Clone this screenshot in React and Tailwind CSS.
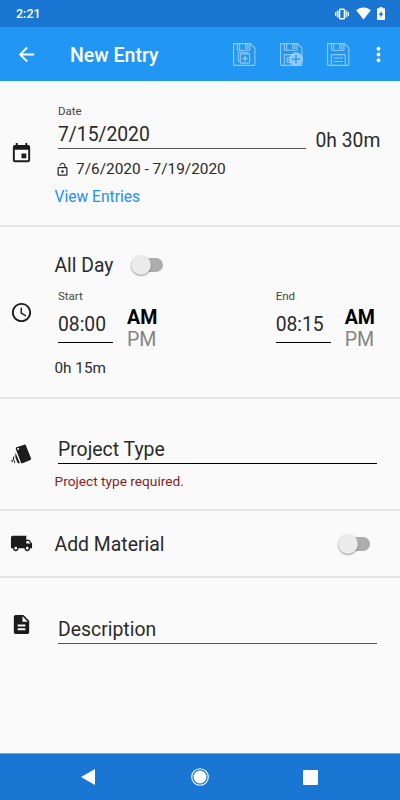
import React, { useState } from 'react';
import {
  MdAccessTime,
  MdArrowBack,
  MdDescription,
  MdEvent,
  MdLocalShipping,
  MdLockOpen,
  MdMoreVert,
} from 'react-icons/md';

const StatusBar = () => (
  <div className="flex h-[27px] shrink-0 items-center bg-[#1976d2] pl-4 pr-[15px] text-white">
    <span className="flex-1 text-[12.5px] font-medium leading-[26px] pt-[1px]">2:21</span>
    <svg width="14" height="12" viewBox="0 0 14 12" className="mr-[7px]">
      <rect x="4.6" y="1.2" width="4.8" height="9.6" rx="0.8" fill="none" stroke="currentColor" strokeWidth="1.4" />
      <path d="M2.700 2.500v7M11.300 2.500v7" stroke="currentColor" strokeWidth="2" opacity="0.75" />
      <path d="M0.700 4v4M13.300 4v4" stroke="currentColor" strokeWidth="1.200" />
    </svg>
    <svg width="15" height="13" viewBox="0 0 15 13" className="mr-[6px]">
      <path d="M7.5 12.6L0.2 3.2C2 1.5 4.6 0.4 7.5 0.4s5.500 1.100 7.300 2.800z" fill="currentColor" />
    </svg>
    <svg width="8" height="13" viewBox="0 0 8 13">
      <path d="M2.500 0h3v1.300H7.200a.8.8 0 0 1 .8.8V12.200a.8.8 0 0 1-.8.8H.8a.8.8 0 0 1-.8-.8V2.100a.8.8 0 0 1 .8-.8h1.700z" fill="currentColor" />
      <path d="M4.500 3.800L1.700 8h1.800v2.800L6.300 6.600H4.500z" fill="#1976d2" />
    </svg>
  </div>
);

// Floppy disk outline shared by the three save actions
const Disk = ({ children }) => (
  <svg width="25" height="25" viewBox="0 0 25 25" fill="none" stroke="#90caf9" strokeWidth="1.1">
    <path d="M1.600 1.600H18.500L22.900 6V22.400a1 1 0 0 1-1 1H2.600a1 1 0 0 1-1-1z" />
    <path d="M5.300 1.600V7.200a1 1 0 0 0 1 1H17a1 1 0 0 0 1-1V1.600" />
    <path d="M7.600 1.600V8.200M13.600 2.800h2.400v3.400h-2.400z" />
    {children}
  </svg>
);

// Fanned stack of cards
const CardsIcon = ({ size, className }) => (
  <svg width={size} height={size} viewBox="0 0 23 23" fill="currentColor" className={className}>
    <path
      fillRule="evenodd"
      d="M7.300 4.100L14.300 1.700a1.300 1.300 0 0 1 1.600.7L21 15.300a1.300 1.300 0 0 1-.7 1.700L12.600 20.200a1.300 1.300 0 0 1-1.700-.7L5.900 6.300a1.500 1.500 0 0 1 1.400-2.200zM8.200 5.100a.9.9 0 1 0 .01 0z"
    />
    <path d="M5.400 9.500L9.900 20.200H8.400a1 1 0 0 1-1-.7L5.400 14.500zM4.100 12.300V16.500L5.300 19.900H4.300L2.800 15.300zM2.200 16.300L3 19.200 1.600 18.600a.9.9 0 0 1-.4-1z" />
  </svg>
);

const AppBar = () => (
  <div className="flex h-[54px] shrink-0 items-center bg-[#2196f3] pr-[10px] pl-[15px] text-white">
    <MdArrowBack size={23} />
    <h1 className="ml-[32px] flex-1 pt-[3px] text-[19.5px] font-medium leading-6">New Entry</h1>
    <div className="flex gap-[22px] mr-[16px] pt-px">
      <Disk>
        <path d="M8.200 19.200H7a.8.8 0 0 1-.8-.8V11a.8.800 0 0 1 .8-.8h8.400a.8.8 0 0 1 .8.8v.8" />
        <rect x="8.300" y="11.900" width="9.300" height="9.200" rx="0.800" />
        <path d="M13 13.800v5.400M10.300 16.500h5.400" strokeWidth="1.500" />
      </Disk>
      <Disk>
        <path d="M5.300 23.200V12.600H14M8 15.500h4M8 18h3M8 20.500h4M8 15.500v5" />
        <circle cx="17" cy="17.200" r="7" fill="#90caf9" stroke="none" />
        <path d="M17 13v8.400M12.800 17.200h8.400" stroke="#2196f3" strokeWidth="1.300" />
      </Disk>
      <Disk>
        <path d="M5.300 23.200V13.600a1 1 0 0 1 1-1h11.900a1 1 0 0 1 1 1v9.600M7.600 16h9.300M7.600 19.500h9.300" />
      </Disk>
    </div>
    <MdMoreVert size={23} />
  </div>
);

const Toggle = ({ checked, onChange }) => (
  <button
    type="button"
    role="switch"
    aria-checked={checked}
    onClick={() => onChange(!checked)}
    className="relative h-5 w-8"
  >
    <span className="absolute top-[3px] left-0 h-[14px] w-8 rounded-full bg-[#adadad]" />
    <span
      className={
        checked
          ? 'absolute top-0 left-[13px] size-5 rounded-full bg-[#2196f3] shadow'
          : 'absolute top-0 left-0 size-5 rounded-full bg-[#ebebeb] shadow-[0_1px_1.5px_rgba(0,0,0,0.4)]'
      }
    />
  </button>
);

const TimeField = ({ label, value }) => (
  <div className="flex">
    <div className="w-[55px]">
      <div className="h-4 text-[11.5px] leading-4 text-[#444]">{label}</div>
      <div className="mt-[3px] h-[36px] border-b border-black text-[19.3px] leading-[35px]">{value}</div>
    </div>
    <div className="ml-[14px] mt-[19px] h-[43px] text-[19.6px] leading-[22px]">
      <div className="font-bold text-black">AM</div>
      <div className="text-[#858585]">PM</div>
    </div>
  </div>
);

const Section = ({ icon: Icon, className, children }) => (
  <section className={`flex items-center border-b-2 border-[#e3e3e3] pl-[10px] ${className}`}>
    <Icon size={23} className="shrink-0 text-[#1c1c1c]" />
    <div className="ml-[21.5px] flex-1 self-stretch">{children}</div>
  </section>
);

const App = () => {
  const [allDay, setAllDay] = useState(false);
  const [material, setMaterial] = useState(false);

  return (
    <div className="flex h-[800px] w-[400px] flex-col overflow-hidden bg-[#fafafa] font-['Roboto',sans-serif] text-[#2a2a2a]">
      <StatusBar />
      <AppBar />

      <main className="flex-1">
        {/* Date */}
        <Section icon={MdEvent} className="h-[146px]">
          <div className="flex">
            <div className="ml-[3.5px] w-[247.5px] border-b border-[#555] pt-[22px]">
              <div className="text-[11.5px] leading-4 text-[#444]">Date</div>
              <div className="h-[29px] text-[19.3px] leading-[31px]">7/15/2020</div>
            </div>
            <div className="ml-[10px] mt-[46px] h-[22px] text-[19.3px] leading-7">0h 30m</div>
          </div>
          <div className="mt-[8px] flex h-6 items-center text-[15.4px] leading-6">
            <MdLockOpen size={15} className="mt-px mr-[6.5px]" />
            7/6/2020 - 7/19/2020
          </div>
          <a href="#entries" className="mt-[3px] block text-[15.6px] leading-[26px] text-[#2190f8]">View Entries</a>
        </Section>

        {/* Time range */}
        <Section icon={MdAccessTime} className="h-[172px]">
          <div className="flex items-start pt-[27px]">
            <span className="w-[76px] text-[19.3px] leading-6">All Day</span>
            <div className="flex pt-px">
              <Toggle checked={allDay} onChange={setAllDay} />
            </div>
          </div>
          <div className="ml-[3.5px] mt-[10px] flex justify-between pr-[25px]">
            <TimeField label="Start" value="08:00" />
            <TimeField label="End" value="08:15" />
          </div>
          <div className="mt-[6px] text-[15.3px] leading-6">0h 15m</div>
        </Section>

        {/* Project type */}
        <Section icon={CardsIcon} className="h-[112px]">
          <div className="ml-[3.5px] mr-[23px] mt-[38px] h-[27px] border-b border-black text-[19.4px] leading-[26px]">
            Project Type
          </div>
          <div className="mt-[7px] text-[13.7px] leading-5 text-[#8b1a1a]">Project type required.</div>
        </Section>

        {/* Material */}
        <Section icon={MdLocalShipping} className="h-[67px]">
          <div className="flex h-full items-center justify-between pr-[30px] pt-px">
            <span className="pt-px text-[19.4px] leading-6">Add Material</span>
            <Toggle checked={material} onChange={setMaterial} />
          </div>
        </Section>

        {/* Description */}
        <section className="flex pl-[10px] pt-[35px]">
          <MdDescription size={23} className="shrink-0 text-[#1c1c1c]" />
          <div className="ml-[25px] mr-[23px] mt-[4px] h-[27px] flex-1 border-b border-[#555] text-[19.4px] leading-[25px]">
            Description
          </div>
        </section>
      </main>

      <nav className="flex h-[47px] shrink-0 items-center border-t border-[#6ba5de] bg-[#1976d2] text-white">
        <svg width="14" height="16" viewBox="0 0 14 16" className="ml-[81px]">
          <path d="M14 0v16L0 8z" fill="currentColor" />
        </svg>
        <svg width="18" height="18" viewBox="0 0 18 18" className="ml-[96px]">
          <circle cx="9" cy="9" r="8.300" fill="none" stroke="currentColor" strokeWidth="1.100" />
          <circle cx="9" cy="9" r="6.500" fill="currentColor" />
        </svg>
        <div className="ml-[94px] size-[15px] rounded-[1px] bg-white" />
      </nav>
    </div>
  );
};

export default App;
